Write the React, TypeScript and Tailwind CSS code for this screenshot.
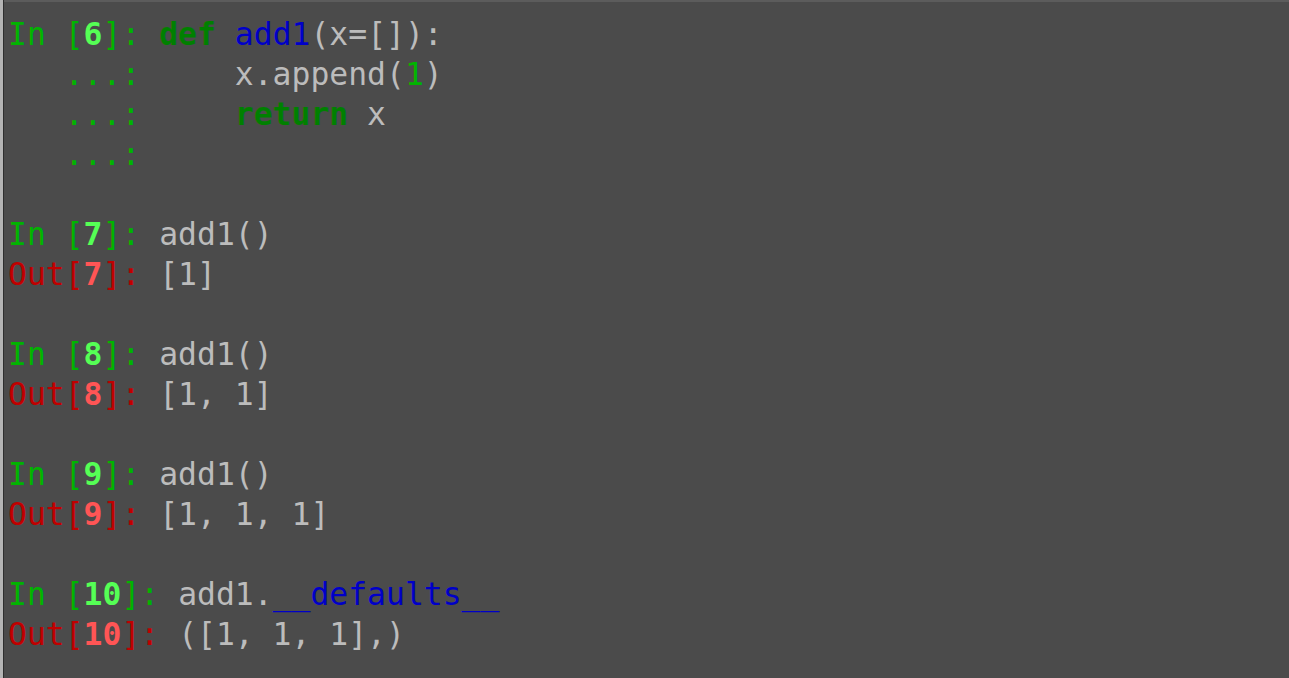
import React from "react";

const G = "text-[#00b400]"; // prompt green
const GB = "text-[#55ff55] font-bold";
const K = "text-[#008000] font-bold";
const B = "text-[#0000c8]";
const T = "text-[#bcbcbc]";
const R = "text-[#c00000]";
const RB = "text-[#ff5555] font-bold";
const N = "text-[#00b400]";

function Line({ children }: { children?: React.ReactNode }) {
  return <div className="h-[40px] whitespace-pre">{children ?? " "}</div>;
}

function InP({ n }: { n: string }) {
  return (
    <>
      <span className={G}>In [</span>
      <span className={GB}>{n}</span>
      <span className={G}>]: </span>
    </>
  );
}
function OutP({ n }: { n: string }) {
  return (
    <>
      <span className={R}>Out[</span>
      <span className={RB}>{n}</span>
      <span className={R}>]: </span>
    </>
  );
}

export default function App() {
  return (
    <div className="w-[1289px] h-[678px] overflow-hidden bg-[#4b4b4b] flex">
      <div className="w-[3px] h-full bg-[#b4b4b4]" />
      <div className="w-[1px] h-full bg-[#2e2e2e]" />
      <div className="flex-1 flex flex-col">
        <div className="h-[2px] bg-[#5c5c5c]" />
        <div
          className="pl-[4px] pt-[12px] text-[31.4px] leading-[40px]"
          style={{ fontFamily: '"DejaVu Sans Mono", monospace' }}
        >
          <Line>
            <InP n="6" />
            <span className={K}>def</span>
            <span className={T}> </span>
            <span className={B}>add1</span>
            <span className={T}>(x=[]):</span>
          </Line>
          <Line>
            <span className={G}>{"   ...:     "}</span>
            <span className={T}>x.append(</span>
            <span className={N}>1</span>
            <span className={T}>)</span>
          </Line>
          <Line>
            <span className={G}>{"   ...:     "}</span>
            <span className={K}>return</span>
            <span className={T}> x</span>
          </Line>
          <Line>
            <span className={G}>{"   ...:"}</span>
          </Line>
          <Line />
          <Line>
            <InP n="7" />
            <span className={T}>add1()</span>
          </Line>
          <Line>
            <OutP n="7" />
            <span className={T}>[1]</span>
          </Line>
          <Line />
          <Line>
            <InP n="8" />
            <span className={T}>add1()</span>
          </Line>
          <Line>
            <OutP n="8" />
            <span className={T}>[1, 1]</span>
          </Line>
          <Line />
          <Line>
            <InP n="9" />
            <span className={T}>add1()</span>
          </Line>
          <Line>
            <OutP n="9" />
            <span className={T}>[1, 1, 1]</span>
          </Line>
          <Line />
          <Line>
            <InP n="10" />
            <span className={T}>add1.</span>
            <span className={B}>__defaults__</span>
          </Line>
          <Line>
            <OutP n="10" />
            <span className={T}>([1, 1, 1],)</span>
          </Line>
        </div>
      </div>
    </div>
  );
}
